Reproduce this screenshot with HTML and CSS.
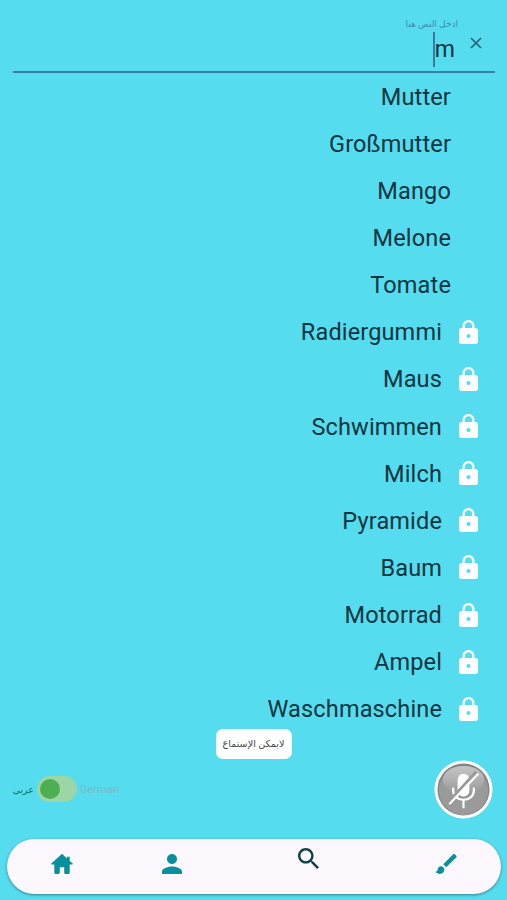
FILE: index.html
```
<!DOCTYPE html>
<html lang="ar" dir="rtl">

<head>
    <meta charset="UTF-8">
    <meta name="viewport" content="width=device-width, initial-scale=1.0">
    <title>بحث</title>
    <link rel="stylesheet" href="styles.css">
</head>

<body>
    <svg class="symbols">
        <symbol id="lock" viewBox="4 1 16 21" preserveAspectRatio="none">
            <path d="M18 8h-1V6c0-2.760-2.240-5-5-5S7 3.240 7 6v2H6c-1.100 0-2 .9-2 2v10c0 1.100.9 2 2 2h12c1.100 0 2-.9 2-2V10c0-1.100-.9-2-2-2zm-6 8.700c-1 0-1.700-.7-1.700-1.700s.7-1.700 1.700-1.700 1.700.7 1.700 1.700-.7 1.700-1.700 1.700zm3.100-8.700H8.900V6c0-1.710 1.390-3.100 3.100-3.100s3.100 1.390 3.100 3.100v2z"/>
        </symbol>
    </svg>

    <div class="search-box">
        <div class="field">
            <div class="label">ادخل النص هنا</div>
            <div class="value"><span class="typed" dir="ltr">m</span><span class="cursor"></span></div>
        </div>
        <svg class="clear" viewBox="0 0 12 12"><path d="M1 1l10 10M11 1L1 11"/></svg>
    </div>

    <div class="results" id="results">
        <div class="word">Mutter</div>
        <div class="word">Großmutter</div>
        <div class="word">Mango</div>
        <div class="word">Melone</div>
        <div class="word">Tomate</div>
        <div class="word locked"><svg class="lock"><use href="#lock"/></svg>Radiergummi</div>
        <div class="word locked"><svg class="lock"><use href="#lock"/></svg>Maus</div>
        <div class="word locked"><svg class="lock"><use href="#lock"/></svg>Schwimmen</div>
        <div class="word locked"><svg class="lock"><use href="#lock"/></svg>Milch</div>
        <div class="word locked"><svg class="lock"><use href="#lock"/></svg>Pyramide</div>
        <div class="word locked"><svg class="lock"><use href="#lock"/></svg>Baum</div>
        <div class="word locked"><svg class="lock"><use href="#lock"/></svg>Motorrad</div>
        <div class="word locked"><svg class="lock"><use href="#lock"/></svg>Ampel</div>
        <div class="word locked"><svg class="lock"><use href="#lock"/></svg>Waschmaschine</div>
    </div>

    <div class="toast">لايمكن الإستماع</div>

    <div class="controls">
        <button class="mic">
            <svg viewBox="0 0 60 60">
                <defs>
                    <linearGradient id="shine" x1="0" y1="0" x2="0" y2="1">
                        <stop offset="0" stop-color="#c6c6c6"/>
                        <stop offset="1" stop-color="#9a9a9a"/>
                    </linearGradient>
                </defs>
                <circle cx="30" cy="30" r="29.500" fill="#fff"/>
                <circle cx="30" cy="30" r="26.500" fill="#858585"/>
                <circle cx="30" cy="31" r="25" fill="#9a9a9a"/>
                <ellipse cx="30" cy="20" rx="21" ry="14" fill="url(#shine)"/>
                <rect x="24" y="14" width="12" height="23" rx="6" fill="#fff"/>
                <path d="M19.500 28v3c0 6 5 9.500 10.500 9.500S40.500 37 40.500 31v-3M30 40.500V49" fill="none" stroke="#fff" stroke-width="2.200"/>
                <path d="M15 42.500L43 12" stroke="#9a9a9a" stroke-width="3"/>
                <path d="M15.500 45L45 14" stroke="#fff" stroke-width="2.200"/>
            </svg>
        </button>
        <div class="language">
            <span class="german">German</span>
            <span class="switch"><span class="knob"></span></span>
            <span class="arabic">عربي</span>
        </div>
    </div>

    <nav dir="ltr">
        <svg class="home" viewBox="2 3 20 18"><path d="M11.300 3.300L2.300 11.600c-.4.400-.2.900.4.900H5V20c0 .6.400 1 1 1h3c.6 0 1-.4 1-1v-5h4v5c0 .6.400 1 1 1h3c.6 0 1-.4 1-1v-7.500h2.300c.6 0 .8-.5.400-.9L19 9.300V5.500h-2.500v1.400l-3.800-3.600c-.4-.4-1-.4-1.400 0z"/></svg>
        <svg class="person" viewBox="4 4 16 16"><path d="M12 12c2.210 0 4-1.790 4-4s-1.790-4-4-4-4 1.790-4 4 1.790 4 4 4zm0 2c-2.670 0-8 1.340-8 4v2h16v-2c0-2.660-5.330-4-8-4z"/></svg>
        <svg class="search" viewBox="3 3 17.500 17.500"><path d="M15.500 14h-.79l-.28-.27C15.410 12.590 16 11.110 16 9.500 16 5.910 13.090 3 9.500 3S3 5.910 3 9.500 5.910 16 9.500 16c1.610 0 3.090-.59 4.230-1.570l.27.280v.79l5 4.990L20.490 19l-4.990-5zm-6 0C7.010 14 5 11.990 5 9.500S7.010 5 9.500 5 14 7.010 14 9.500 11.990 14 9.500 14z"/></svg>
        <svg class="brush" viewBox="2 3 19 18"><path d="M7 14c-1.660 0-3 1.340-3 3 0 1.310-1.160 2-2 2 .92 1.220 2.490 2 4 2 2.210 0 4-1.790 4-4 0-1.660-1.340-3-3-3zm13.710-9.370l-1.340-1.340c-.39-.39-1.020-.39-1.410 0L9 12.250 11.750 15l8.960-8.960c.39-.39.390-1.020 0-1.410z"/></svg>
    </nav>
</body>

</html>
```

FILE: styles.css
```
* {
    box-sizing: border-box;
}

body {
    margin: 0;
    height: 900px;
    display: flex;
    flex-direction: column;
    overflow: hidden;
    background-color: #55dcee;
    color: #0e3440;
    font-family: Roboto, "DejaVu Sans", sans-serif;
}

.symbols {
    position: absolute;
    width: 0;
    height: 0;
}

.search-box {
    display: flex;
    height: 55px;
    margin: 18px 12px 0 13px;
    padding-right: 13px;
    border-bottom: 2px solid #3a7ea6;
    flex-direction: row-reverse;
    justify-content: flex-end;
}

.field {
    margin-right: 15px;
}

.label {
    height: 13px;
    line-height: 13px;
    font-size: 9px;
    color: #3b91ad;
    margin-right: -3px;
}

.value {
    display: flex;
    height: 36px;
    align-items: center;
}

.typed {
    font-size: 23px;
    line-height: 36px;
    padding-top: 2px;
}

.cursor {
    width: 2px;
    height: 35px;
    background-color: #3d78a0;
}

.clear {
    width: 12px;
    height: 12px;
    margin-top: 19px;
    fill: none;
    stroke: #24606f;
    stroke-width: 1.6;
}

.results {
    height: 660px;
    display: grid;
    grid-template-rows: repeat(14, 1fr);
}

.word {
    display: flex;
    align-items: center;
    padding-right: 56px;
    font-size: 23.5px;
    letter-spacing: 0.15px;
}

.word.locked {
    padding-right: 29px;
    gap: 17px;
}

.lock {
    width: 19px;
    height: 24px;
    margin-bottom: 1px;
    fill: #fff;
}

.toast {
    align-self: center;
    width: 76px;
    height: 30px;
    margin-top: -4px;
    border-radius: 7px;
    background-color: #fff;
    color: #444;
    font-size: 9.6px;
    line-height: 29px;
    text-align: center;
    white-space: nowrap;
}

.controls {
    display: flex;
    justify-content: space-between;
    align-items: center;
    height: 60px;
    margin: 0 14px 0 13px;
}

.mic {
    width: 59px;
    height: 59px;
    padding: 0;
    border: none;
    background: none;
}

.mic svg {
    display: block;
}

.language {
    display: flex;
    align-items: center;
    gap: 3px;
    font-size: 10px;
}

.german {
    color: #83b7c0;
    font-size: 11px;
}

.switch {
    width: 40px;
    height: 26px;
    padding: 3px;
    border-radius: 13px;
    background-color: #9cd6a5;
    display: flex;
    justify-content: flex-end;
}

.knob {
    width: 20px;
    height: 20px;
    border-radius: 50%;
    background-color: #4caf50;
}

.arabic {
    width: 21px;
    font-size: 9.5px;
    color: #087568;
}

nav {
    display: flex;
    height: 55px;
    margin: 20px 6px 0 7px;
    padding: 0 44px;
    border-radius: 28px;
    background-color: #fdf7fe;
    box-shadow: 0 1px 3px rgba(0, 0, 0, 0.4);
}

nav svg {
    fill: #09909d;
    margin-top: 15px;
}

.home {
    width: 22px;
    height: 20px;
}

.person {
    width: 20px;
    height: 20px;
    margin-left: 89px;
}

nav .search {
    width: 21px;
    height: 21px;
    margin-top: 9px;
    margin-left: 116px;
    fill: #124047;
}

.brush {
    width: 22px;
    height: 20px;
    margin-left: auto;
}
```
